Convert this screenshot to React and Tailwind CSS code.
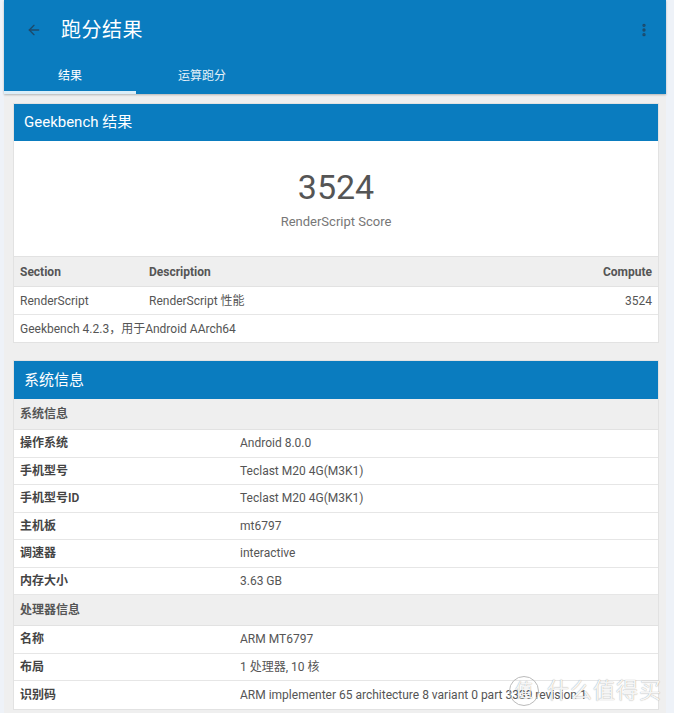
import { ArrowLeft, MoreVertical } from "lucide-react";

const sysRows = [
  { label: "系统信息", section: true },
  { label: "操作系统", value: "Android 8.0.0" },
  { label: "手机型号", value: "Teclast M20 4G(M3K1)" },
  { label: "手机型号ID", value: "Teclast M20 4G(M3K1)" },
  { label: "主机板", value: "mt6797" },
  { label: "调速器", value: "interactive" },
  { label: "内存大小", value: "3.63 GB" },
  { label: "处理器信息", section: true },
  { label: "名称", value: "ARM MT6797" },
  { label: "布局", value: "1 处理器, 10 核" },
  {
    label: "识别码",
    value: "ARM implementer 65 architecture 8 variant 0 part 3339 revision 1",
  },
];

const font = {
  fontFamily: "Roboto, 'Noto Sans CJK SC', sans-serif",
};

const App = () => {
  return (
    <div
      className="min-h-[713px] w-[674px] bg-[#eef2f8] flex relative"
      style={font}
    >
      <div className="ml-[4px] w-[662px] bg-[#efefef] flex flex-col pb-[6px]">
        {/* app bar */}
        <div className="bg-[#0a7cbf] shadow-[0_1px_2px_rgba(0,0,0,0.25)]">
          <div className="h-[57px] flex items-center pl-[22px] pr-[14px] pt-[2px]">
            <ArrowLeft className="w-[16px] h-[16px] text-[#1d4a6b]" strokeWidth={2} />
            <span className="ml-[19px] text-[20px] text-white tracking-wide">
              跑分结果
            </span>
            <MoreVertical className="ml-auto w-[16px] h-[16px] text-[#1d4a6b]" strokeWidth={3} />
          </div>
          <div className="h-[37px] flex">
            <div className="w-[132px] flex flex-col">
              <div className="flex-1 flex items-center justify-center pt-[3px] text-[12px] text-white">
                结果
              </div>
              <div className="h-[3px] bg-[#dceef8]" />
            </div>
            <div className="w-[132px] flex items-center justify-center text-[12px] text-white/90">
              运算跑分
            </div>
          </div>
        </div>

        {/* geekbench card */}
        <div className="mt-[9px] ml-[9px] mr-[7px] bg-white border border-[#e2e2e2]">
          <div className="h-[37px] bg-[#0a7cbf] flex items-center px-[10px] text-[15px] text-white">
            Geekbench 结果
          </div>
          <div className="h-[115px] flex flex-col items-center pt-[26px]">
            <div className="text-[34px] leading-[40px] text-[#555]">3524</div>
            <div className="mt-[5px] text-[13px] text-[#777]">RenderScript Score</div>
          </div>
          <div className="h-[31px] bg-[#efefef] border-t border-b border-[#e2e2e2] flex items-center px-[6px] text-[12px] font-bold text-[#555]">
            <div className="w-[129px]">Section</div>
            <div className="flex-1">Description</div>
            <div>Compute</div>
          </div>
          <div className="h-[28px] border-b border-[#e6e6e6] flex items-center px-[6px] text-[12px] text-[#555]">
            <div className="w-[129px]">RenderScript</div>
            <div className="flex-1">RenderScript 性能</div>
            <div>3524</div>
          </div>
          <div className="h-[27px] flex items-center px-[6px] text-[12px] text-[#555]">
            Geekbench 4.2.3，用于Android AArch64
          </div>
        </div>

        {/* system info card */}
        <div className="mt-[17px] ml-[9px] mr-[7px] bg-white border border-[#e2e2e2]">
          <div className="h-[38px] bg-[#0a7cbf] flex items-center px-[10px] text-[15px] text-white">
            系统信息
          </div>
          {sysRows.map((row, index) =>
            row.section ? (
              <div
                key={index}
                className="h-[31px] bg-[#efefef] border-b border-[#e2e2e2] flex items-center px-[6px] text-[12px] font-semibold text-[#555]"
              >
                {row.label}
              </div>
            ) : (
              <div
                key={index}
                className={
                  index === sysRows.length - 1
                    ? "h-[27.5px] flex items-center px-[6px] text-[12px] text-[#555]"
                    : "h-[27.5px] border-b border-[#e6e6e6] flex items-center px-[6px] text-[12px] text-[#555]"
                }
              >
                <div className="w-[220px] font-semibold text-[#444]">{row.label}</div>
                <div className="whitespace-nowrap">{row.value}</div>
              </div>
            )
          )}
        </div>
      </div>

      {/* watermark */}
      <div className="absolute left-[509px] top-[674px] flex items-center gap-[8px] text-white/90 pointer-events-none [text-shadow:0_0_1px_rgba(0,0,0,0.45)]">
        <div className="w-[30px] h-[30px] rounded-full border border-[#bbb] flex items-center justify-center text-[18px]">
          值
        </div>
        <span className="text-[22px] tracking-[1px]">什么值得买</span>
      </div>
    </div>
  );
};

export default App;
